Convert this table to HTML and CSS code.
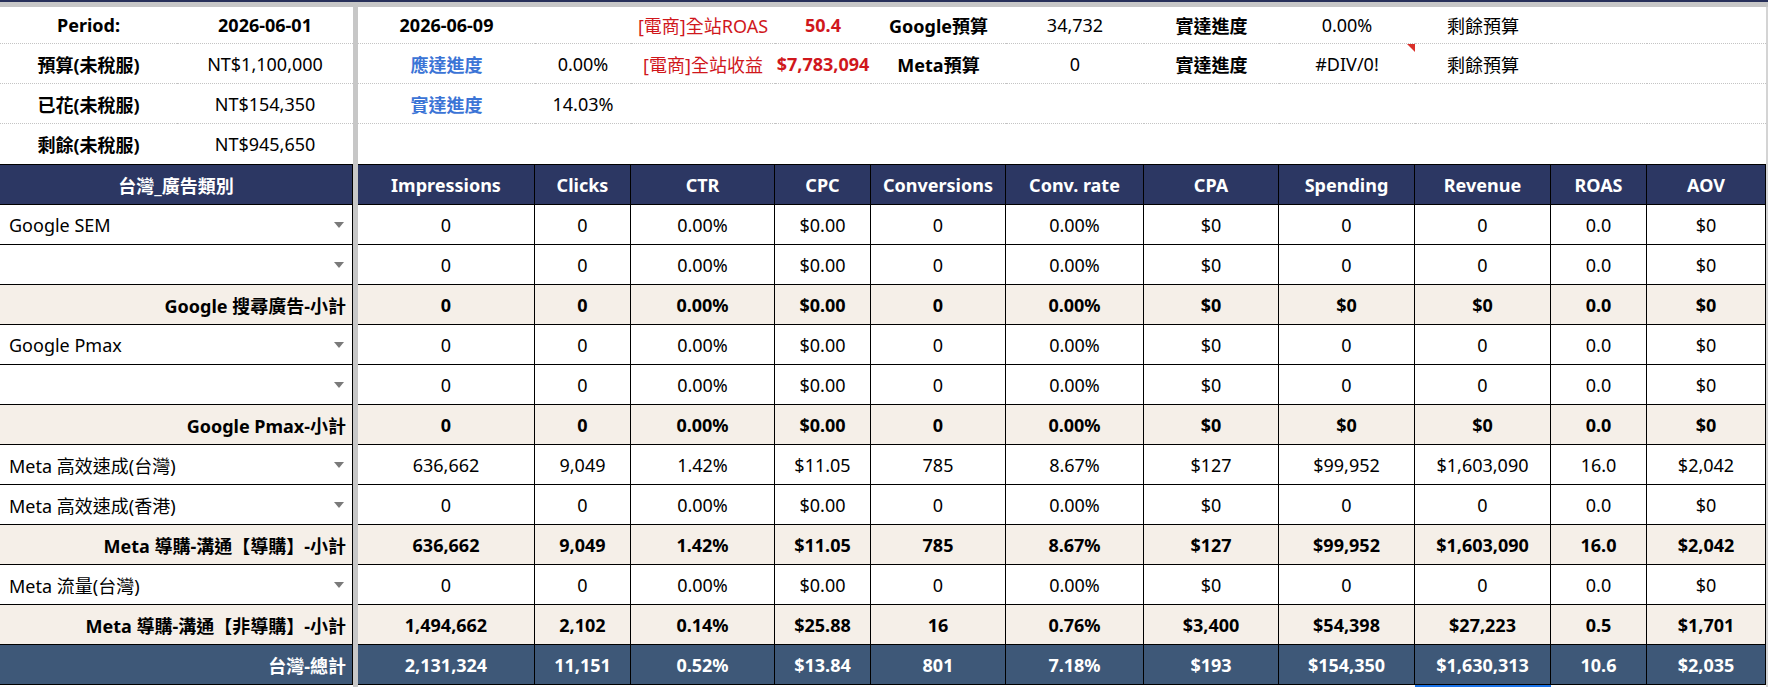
FILE: index.html
```html
<!DOCTYPE html>
<html lang="zh-Hant">
<head>
<meta charset="utf-8">
<title>台灣 廣告報表</title>
<link rel="stylesheet" href="styles.css">
</head>
<body>
<div class="sheet">
  <div class="topstrip"></div>

  <div class="row info first">
    <div class="cell b">Period:</div>
    <div class="cell b">2026-06-01</div>
    <div class="gut"></div>
    <div class="cell b">2026-06-09</div>
    <div class="cell"></div>
    <div class="cell red">[電商]全站ROAS</div>
    <div class="cell red b">50.4</div>
    <div class="cell b">Google預算</div>
    <div class="cell">34,732</div>
    <div class="cell b">實達進度</div>
    <div class="cell">0.00%</div>
    <div class="cell">剩餘預算</div>
    <div class="cell"></div>
    <div class="cell"></div>
    <div class="edge"></div>
  </div>

  <div class="row info">
    <div class="cell b">預算(未稅服)</div>
    <div class="cell">NT$1,100,000</div>
    <div class="gut"></div>
    <div class="cell blue b">應達進度</div>
    <div class="cell">0.00%</div>
    <div class="cell red">[電商]全站收益</div>
    <div class="cell red b">$7,783,094</div>
    <div class="cell b">Meta預算</div>
    <div class="cell">0</div>
    <div class="cell b">實達進度</div>
    <div class="cell note">#DIV/0!</div>
    <div class="cell">剩餘預算</div>
    <div class="cell"></div>
    <div class="cell"></div>
    <div class="edge"></div>
  </div>

  <div class="row info">
    <div class="cell b">已花(未稅服)</div>
    <div class="cell">NT$154,350</div>
    <div class="gut"></div>
    <div class="cell blue b">實達進度</div>
    <div class="cell">14.03%</div>
    <div class="cell"></div>
    <div class="cell"></div>
    <div class="cell"></div>
    <div class="cell"></div>
    <div class="cell"></div>
    <div class="cell"></div>
    <div class="cell"></div>
    <div class="cell"></div>
    <div class="cell"></div>
    <div class="edge"></div>
  </div>

  <div class="row info last">
    <div class="cell b">剩餘(未稅服)</div>
    <div class="cell">NT$945,650</div>
    <div class="gut"></div>
    <div class="cell"></div>
    <div class="cell"></div>
    <div class="cell"></div>
    <div class="cell"></div>
    <div class="cell"></div>
    <div class="cell"></div>
    <div class="cell"></div>
    <div class="cell"></div>
    <div class="cell"></div>
    <div class="cell"></div>
    <div class="cell"></div>
    <div class="edge"></div>
  </div>

  <div class="row grid head">
    <div class="cell label-span">台灣_廣告類別</div>
    <div class="gut"></div>
    <div class="cell">Impressions</div>
    <div class="cell">Clicks</div>
    <div class="cell">CTR</div>
    <div class="cell">CPC</div>
    <div class="cell">Conversions</div>
    <div class="cell">Conv. rate</div>
    <div class="cell">CPA</div>
    <div class="cell">Spending</div>
    <div class="cell">Revenue</div>
    <div class="cell">ROAS</div>
    <div class="cell">AOV</div>
    <div class="edge"></div>
  </div>

  <div class="row grid">
    <div class="cell label-span pick"><span>Google SEM</span><i class="caret"></i></div>
    <div class="gut"></div>
    <div class="cell">0</div><div class="cell">0</div><div class="cell">0.00%</div><div class="cell">$0.00</div><div class="cell">0</div><div class="cell">0.00%</div><div class="cell">$0</div><div class="cell">0</div><div class="cell">0</div><div class="cell">0.0</div><div class="cell">$0</div>
    <div class="edge"></div>
  </div>

  <div class="row grid">
    <div class="cell label-span pick"><span></span><i class="caret"></i></div>
    <div class="gut"></div>
    <div class="cell">0</div><div class="cell">0</div><div class="cell">0.00%</div><div class="cell">$0.00</div><div class="cell">0</div><div class="cell">0.00%</div><div class="cell">$0</div><div class="cell">0</div><div class="cell">0</div><div class="cell">0.0</div><div class="cell">$0</div>
    <div class="edge"></div>
  </div>

  <div class="row grid sub">
    <div class="cell label-span right">Google 搜尋廣告-小計</div>
    <div class="gut"></div>
    <div class="cell">0</div><div class="cell">0</div><div class="cell">0.00%</div><div class="cell">$0.00</div><div class="cell">0</div><div class="cell">0.00%</div><div class="cell">$0</div><div class="cell">$0</div><div class="cell">$0</div><div class="cell">0.0</div><div class="cell">$0</div>
    <div class="edge"></div>
  </div>

  <div class="row grid">
    <div class="cell label-span pick"><span>Google Pmax</span><i class="caret"></i></div>
    <div class="gut"></div>
    <div class="cell">0</div><div class="cell">0</div><div class="cell">0.00%</div><div class="cell">$0.00</div><div class="cell">0</div><div class="cell">0.00%</div><div class="cell">$0</div><div class="cell">0</div><div class="cell">0</div><div class="cell">0.0</div><div class="cell">$0</div>
    <div class="edge"></div>
  </div>

  <div class="row grid">
    <div class="cell label-span pick"><span></span><i class="caret"></i></div>
    <div class="gut"></div>
    <div class="cell">0</div><div class="cell">0</div><div class="cell">0.00%</div><div class="cell">$0.00</div><div class="cell">0</div><div class="cell">0.00%</div><div class="cell">$0</div><div class="cell">0</div><div class="cell">0</div><div class="cell">0.0</div><div class="cell">$0</div>
    <div class="edge"></div>
  </div>

  <div class="row grid sub">
    <div class="cell label-span right">Google Pmax-小計</div>
    <div class="gut"></div>
    <div class="cell">0</div><div class="cell">0</div><div class="cell">0.00%</div><div class="cell">$0.00</div><div class="cell">0</div><div class="cell">0.00%</div><div class="cell">$0</div><div class="cell">$0</div><div class="cell">$0</div><div class="cell">0.0</div><div class="cell">$0</div>
    <div class="edge"></div>
  </div>

  <div class="row grid">
    <div class="cell label-span pick"><span>Meta 高效速成(台灣)</span><i class="caret"></i></div>
    <div class="gut"></div>
    <div class="cell">636,662</div><div class="cell">9,049</div><div class="cell">1.42%</div><div class="cell">$11.05</div><div class="cell">785</div><div class="cell">8.67%</div><div class="cell">$127</div><div class="cell">$99,952</div><div class="cell">$1,603,090</div><div class="cell">16.0</div><div class="cell">$2,042</div>
    <div class="edge"></div>
  </div>

  <div class="row grid">
    <div class="cell label-span pick"><span>Meta 高效速成(香港)</span><i class="caret"></i></div>
    <div class="gut"></div>
    <div class="cell">0</div><div class="cell">0</div><div class="cell">0.00%</div><div class="cell">$0.00</div><div class="cell">0</div><div class="cell">0.00%</div><div class="cell">$0</div><div class="cell">0</div><div class="cell">0</div><div class="cell">0.0</div><div class="cell">$0</div>
    <div class="edge"></div>
  </div>

  <div class="row grid sub">
    <div class="cell label-span right">Meta 導購-溝通【導購】-小計</div>
    <div class="gut"></div>
    <div class="cell">636,662</div><div class="cell">9,049</div><div class="cell">1.42%</div><div class="cell">$11.05</div><div class="cell">785</div><div class="cell">8.67%</div><div class="cell">$127</div><div class="cell">$99,952</div><div class="cell">$1,603,090</div><div class="cell">16.0</div><div class="cell">$2,042</div>
    <div class="edge"></div>
  </div>

  <div class="row grid">
    <div class="cell label-span pick"><span>Meta 流量(台灣)</span><i class="caret"></i></div>
    <div class="gut"></div>
    <div class="cell">0</div><div class="cell">0</div><div class="cell">0.00%</div><div class="cell">$0.00</div><div class="cell">0</div><div class="cell">0.00%</div><div class="cell">$0</div><div class="cell">0</div><div class="cell">0</div><div class="cell">0.0</div><div class="cell">$0</div>
    <div class="edge"></div>
  </div>

  <div class="row grid sub">
    <div class="cell label-span right">Meta 導購-溝通【非導購】-小計</div>
    <div class="gut"></div>
    <div class="cell">1,494,662</div><div class="cell">2,102</div><div class="cell">0.14%</div><div class="cell">$25.88</div><div class="cell">16</div><div class="cell">0.76%</div><div class="cell">$3,400</div><div class="cell">$54,398</div><div class="cell">$27,223</div><div class="cell">0.5</div><div class="cell">$1,701</div>
    <div class="edge"></div>
  </div>

  <div class="row grid total">
    <div class="cell label-span right">台灣-總計</div>
    <div class="gut"></div>
    <div class="cell">2,131,324</div><div class="cell">11,151</div><div class="cell">0.52%</div><div class="cell">$13.84</div><div class="cell">801</div><div class="cell">7.18%</div><div class="cell">$193</div><div class="cell">$154,350</div><div class="cell">$1,630,313</div><div class="cell">10.6</div><div class="cell">$2,035</div>
    <div class="edge"></div>
  </div>

  <div class="row tail">
    <div class="label-span"></div>
    <div class="gut"></div>
    <div class="sel"></div>
    <div class="edge"></div>
  </div>
</div>
</body>
</html>
```

FILE: styles.css
```css
* {
  box-sizing: border-box;
}

html, body {
  margin: 0;
  padding: 0;
  background: #ffffff;
}

body {
  width: 1768px;
  height: 687px;
  overflow: hidden;
  font-family: "Noto Sans", "Noto Sans CJK TC", sans-serif;
  font-size: 18px;
  color: #000000;
}

.sheet {
  display: flex;
  flex-direction: column;
  width: 1768px;
}

.topstrip {
  height: 7px;
  border-top: 2px solid #27305a;
  background: #c7c7c7;
}

.row {
  display: grid;
  grid-template-columns: 177px 176px 5px 177px 96px 144px 96px 135px 138px 135px 136px 136px 96px 119px 2px;
  height: 40px;
}

.cell {
  display: flex;
  align-items: center;
  justify-content: center;
  white-space: nowrap;
  min-width: 0;
  position: relative;
}

.gut {
  background: #c7c7c7;
}

.edge {
  background: #d4d4d4;
}

.label-span {
  grid-column: span 2;
}

/* info block */
.info.first {
  height: 37px;
}

.info .cell {
  border-bottom: 1px dotted #c4c4c4;
}

.info.last .cell {
  border-bottom: none;
}

.b {
  font-weight: 700;
}

.red {
  color: #d0171c;
}

.blue {
  color: #3b74d6;
}

.note::after {
  content: "";
  position: absolute;
  top: 0;
  right: 0;
  border-left: 8px solid transparent;
  border-top: 8px solid #d9302a;
}

/* grid block */
.grid .cell {
  border-right: 1px solid #000000;
  border-bottom: 1px solid #000000;
}

.head {
  height: 41px;
  font-weight: 700;
  color: #ffffff;
}

.head .cell {
  background: #2c3763;
  border-top: 1px solid #000000;
}

.pick {
  justify-content: space-between;
  padding: 0 8px 0 9px;
}

.caret {
  width: 0;
  height: 0;
  border-left: 5.5px solid transparent;
  border-right: 5.5px solid transparent;
  border-top: 6px solid #7a7a7a;
}

.right {
  justify-content: flex-end;
  padding-right: 6px;
}

.sub .cell {
  background: #f5efe8;
  font-weight: 700;
}

.total .cell {
  background: #3e5878;
  color: #ffffff;
  font-weight: 700;
}

.tail {
  height: 3px;
}

.sel {
  grid-column: 12 / 13;
  border-top: 2px solid #1a73e8;
}

.tail .edge {
  grid-column: 15 / 16;
}
```
